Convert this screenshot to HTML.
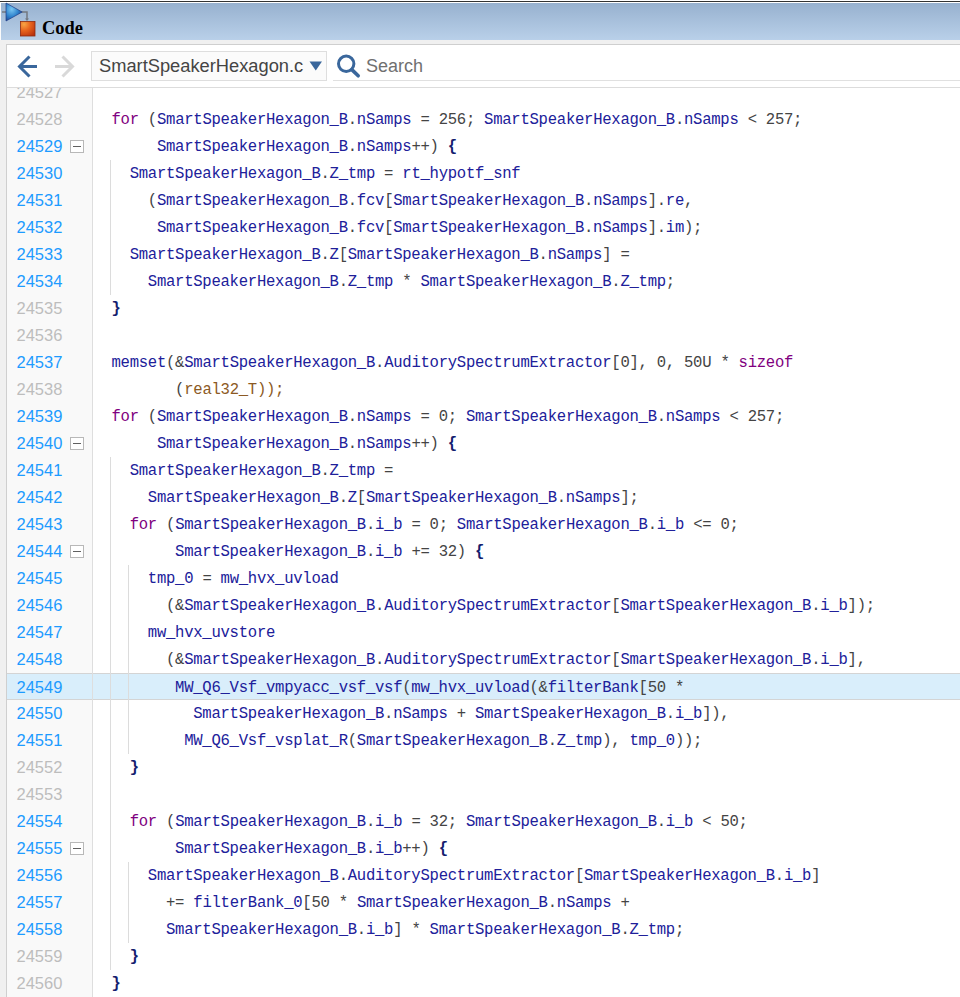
<!DOCTYPE html>
<html><head><meta charset="utf-8">
<style>
html,body{margin:0;padding:0;}
body{width:960px;height:997px;overflow:hidden;background:#f0f0f0;position:relative;font-family:"Liberation Sans",sans-serif;}
#topline{position:absolute;left:0;top:0;width:960px;height:3px;background:#fff;}
#lstrip{position:absolute;left:0;top:0;width:1px;height:40px;background:#fbfbfb;}
#topline i{position:absolute;left:0;top:1px;width:960px;height:1px;background:#333;}
#hdr{position:absolute;left:1px;top:3px;width:959px;height:37px;background:linear-gradient(#97b1cf,#b9d0e9);}
#hdr svg{position:absolute;left:-1px;top:-3px;}
#hdr .t{position:absolute;left:40.5px;top:14.5px;font-family:"Liberation Serif",serif;font-weight:bold;font-size:19px;color:#000;line-height:20px;transform:scaleX(0.97);transform-origin:0 0;}
#panel{position:absolute;left:6px;top:44px;width:960px;height:960px;border:1px solid #cfcfcf;background:#fff;}
#tb{position:absolute;left:7px;top:45px;width:953px;height:42px;background:#fff;}
#sep{position:absolute;left:7px;top:87px;width:953px;height:1px;background:#dcdcdc;}
#dd{position:absolute;left:91px;top:51px;width:234px;height:28px;border:1px solid #dedede;background:#fbfbfb;}
#dd .t{position:absolute;left:7px;top:3.5px;font-size:18.3px;line-height:20px;color:#444;white-space:nowrap;}
#search{position:absolute;left:366px;top:55.5px;font-size:18px;line-height:20px;color:#707070;}
#sline{position:absolute;left:333px;top:80px;width:627px;height:1px;background:#e0e0e0;}
#code{position:absolute;left:7px;top:88px;width:953px;height:909px;overflow:hidden;background:#fff;}
#gut{position:absolute;left:0;top:0;width:85px;height:909px;background:#f9f9f9;}
#gutb{position:absolute;left:85px;top:0;width:1px;height:909px;background:#dedede;}
.ln{position:absolute;left:0;width:953px;height:27px;}
.ln .n{position:absolute;left:9.5px;top:0;font-size:16.5px;line-height:27px;color:#bdbdbd;}
.ln .n.b{color:#1d9bff;}
.ln .c{position:absolute;left:104.5px;top:1px;font-family:"Liberation Mono",monospace;font-size:15.6px;letter-spacing:-0.2715px;line-height:27px;white-space:pre;color:#20209a;}
.fold{position:absolute;left:63px;top:7px;width:12px;height:11px;border:1px solid #b8b8b8;background:#fff;}
.fold i{position:absolute;left:2px;top:5px;width:8px;height:1px;background:#606060;}
.g{position:absolute;width:1px;background:#dcdcdc;}
.hl{background:#d9eefb;border-top:1px solid #d4d4d4;border-bottom:1px solid #d4d4d4;box-sizing:border-box;}
.k{color:#800080;}
.o{color:#444;}
.ty{color:#8c5a24;}
.br{color:#14206e;font-weight:bold;}
</style></head><body>
<div id="lstrip"></div><div id="topline"><i></i></div>
<div id="hdr">
<svg width="40" height="40" viewBox="0 0 40 40">
<defs>
<radialGradient id="tri" cx="0.35" cy="0.35" r="0.75"><stop offset="0" stop-color="#79c6f2"/><stop offset="0.55" stop-color="#2e82cc"/><stop offset="1" stop-color="#1b3f8e"/></radialGradient>
<radialGradient id="sq" cx="0.25" cy="0.2" r="0.95"><stop offset="0" stop-color="#f7a545"/><stop offset="0.45" stop-color="#e8651f"/><stop offset="1" stop-color="#b93310"/></radialGradient>
</defs>
<path d="M2 12H6.5M21.5 12H27V19" stroke="#737880" stroke-width="1.5" fill="none"/>
<path d="M25 18.5L27 21L29 18.5Z" fill="#737880"/>
<path d="M6 3L22.2 12L6 21Z" fill="url(#tri)" stroke="#1f3d86" stroke-width="0.7" stroke-linejoin="round"/>
<rect x="20.4" y="21.4" width="14.6" height="14.6" fill="url(#sq)" stroke="#8c2c12" stroke-width="0.8"/>
</svg>
<div class="t">Code</div>
</div>
<div id="panel"></div>
<div id="tb">
<svg style="position:absolute;left:0;top:0" width="80" height="42" viewBox="0 0 80 42">
<path d="M22.5 11.5L12.5 21.5L22.5 31.5M12.5 21.5H30" stroke="#3a679c" stroke-width="3" fill="none"/>
<path d="M55.5 11.5L65.5 21.5L55.5 31.5M48 21.5H65.5" stroke="#d9d9d9" stroke-width="3" fill="none"/>
</svg>
</div>
<div id="dd"><div class="t">SmartSpeakerHexagon.c</div>
<svg style="position:absolute;left:217px;top:9px" width="14" height="10" viewBox="0 0 14 10"><path d="M0.5 0.5H13L6.75 9.5Z" fill="#3a679c"/></svg>
</div>
<svg style="position:absolute;left:335px;top:54px" width="26" height="26" viewBox="0 0 26 26">
<circle cx="11.2" cy="9.8" r="7.7" stroke="#3a679c" stroke-width="3" fill="none"/>
<path d="M16.8 15.6L23.2 21.8" stroke="#3a679c" stroke-width="3.6" stroke-linecap="round"/>
</svg>
<div id="search">Search</div>
<div id="sline"></div>
<div id="sep"></div>
<div id="code">
<div id="gut"></div>
<div class="ln" style="top:-9px"><span class="n">24527</span><span class="c"></span></div>
<div class="ln" style="top:18px"><span class="n">24528</span><span class="c"><span class="k">for</span> <span class="o">(</span>SmartSpeakerHexagon_B<span class="o">.</span>nSamps <span class="o">=</span> <span class="o">256;</span> SmartSpeakerHexagon_B<span class="o">.</span>nSamps <span class="o">&lt;</span> <span class="o">257;</span></span></div>
<div class="ln" style="top:45px"><span class="n b">24529</span><span class="fold"><i></i></span><span class="c">     SmartSpeakerHexagon_B<span class="o">.</span>nSamps<span class="o">++)</span> <span class="br">{</span></span></div>
<div class="ln" style="top:72px"><span class="n b">24530</span><span class="c">  SmartSpeakerHexagon_B<span class="o">.</span>Z_tmp <span class="o">=</span> rt_hypotf_snf</span></div>
<div class="ln" style="top:99px"><span class="n b">24531</span><span class="c">    <span class="o">(</span>SmartSpeakerHexagon_B<span class="o">.</span>fcv<span class="o">[</span>SmartSpeakerHexagon_B<span class="o">.</span>nSamps<span class="o">].</span>re<span class="o">,</span></span></div>
<div class="ln" style="top:126px"><span class="n b">24532</span><span class="c">     SmartSpeakerHexagon_B<span class="o">.</span>fcv<span class="o">[</span>SmartSpeakerHexagon_B<span class="o">.</span>nSamps<span class="o">].</span>im<span class="o">);</span></span></div>
<div class="ln" style="top:153px"><span class="n b">24533</span><span class="c">  SmartSpeakerHexagon_B<span class="o">.</span>Z<span class="o">[</span>SmartSpeakerHexagon_B<span class="o">.</span>nSamps<span class="o">]</span> <span class="o">=</span></span></div>
<div class="ln" style="top:180px"><span class="n b">24534</span><span class="c">    SmartSpeakerHexagon_B<span class="o">.</span>Z_tmp <span class="o">*</span> SmartSpeakerHexagon_B<span class="o">.</span>Z_tmp<span class="o">;</span></span></div>
<div class="ln" style="top:207px"><span class="n">24535</span><span class="c"><span class="br">}</span></span></div>
<div class="ln" style="top:234px"><span class="n">24536</span><span class="c"></span></div>
<div class="ln" style="top:261px"><span class="n b">24537</span><span class="c">memset<span class="o">(&amp;</span>SmartSpeakerHexagon_B<span class="o">.</span>AuditorySpectrumExtractor<span class="o">[0],</span> <span class="o">0,</span> <span class="o">50U</span> <span class="o">*</span> <span class="k">sizeof</span></span></div>
<div class="ln" style="top:288px"><span class="n">24538</span><span class="c">       <span class="o">(</span><span class="ty">real32_T));</span></span></div>
<div class="ln" style="top:315px"><span class="n b">24539</span><span class="c"><span class="k">for</span> <span class="o">(</span>SmartSpeakerHexagon_B<span class="o">.</span>nSamps <span class="o">=</span> <span class="o">0;</span> SmartSpeakerHexagon_B<span class="o">.</span>nSamps <span class="o">&lt;</span> <span class="o">257;</span></span></div>
<div class="ln" style="top:342px"><span class="n b">24540</span><span class="fold"><i></i></span><span class="c">     SmartSpeakerHexagon_B<span class="o">.</span>nSamps<span class="o">++)</span> <span class="br">{</span></span></div>
<div class="ln" style="top:369px"><span class="n b">24541</span><span class="c">  SmartSpeakerHexagon_B<span class="o">.</span>Z_tmp <span class="o">=</span></span></div>
<div class="ln" style="top:396px"><span class="n b">24542</span><span class="c">    SmartSpeakerHexagon_B<span class="o">.</span>Z<span class="o">[</span>SmartSpeakerHexagon_B<span class="o">.</span>nSamps<span class="o">];</span></span></div>
<div class="ln" style="top:423px"><span class="n b">24543</span><span class="c">  <span class="k">for</span> <span class="o">(</span>SmartSpeakerHexagon_B<span class="o">.</span>i_b <span class="o">=</span> <span class="o">0;</span> SmartSpeakerHexagon_B<span class="o">.</span>i_b <span class="o">&lt;=</span> <span class="o">0;</span></span></div>
<div class="ln" style="top:450px"><span class="n b">24544</span><span class="fold"><i></i></span><span class="c">       SmartSpeakerHexagon_B<span class="o">.</span>i_b <span class="o">+=</span> <span class="o">32)</span> <span class="br">{</span></span></div>
<div class="ln" style="top:477px"><span class="n b">24545</span><span class="c">    tmp_0 <span class="o">=</span> mw_hvx_uvload</span></div>
<div class="ln" style="top:504px"><span class="n b">24546</span><span class="c">      <span class="o">(&amp;</span>SmartSpeakerHexagon_B<span class="o">.</span>AuditorySpectrumExtractor<span class="o">[</span>SmartSpeakerHexagon_B<span class="o">.</span>i_b<span class="o">]);</span></span></div>
<div class="ln" style="top:531px"><span class="n b">24547</span><span class="c">    mw_hvx_uvstore</span></div>
<div class="ln" style="top:558px"><span class="n b">24548</span><span class="c">      <span class="o">(&amp;</span>SmartSpeakerHexagon_B<span class="o">.</span>AuditorySpectrumExtractor<span class="o">[</span>SmartSpeakerHexagon_B<span class="o">.</span>i_b<span class="o">],</span></span></div>
<div class="ln hl" style="top:585px"><span class="n b">24549</span><span class="c">       MW_Q6_Vsf_vmpyacc_vsf_vsf<span class="o">(</span>mw_hvx_uvload<span class="o">(&amp;</span>filterBank<span class="o">[50</span> <span class="o">*</span></span></div>
<div class="ln" style="top:612px"><span class="n b">24550</span><span class="c">         SmartSpeakerHexagon_B<span class="o">.</span>nSamps <span class="o">+</span> SmartSpeakerHexagon_B<span class="o">.</span>i_b<span class="o">]),</span></span></div>
<div class="ln" style="top:639px"><span class="n b">24551</span><span class="c">        MW_Q6_Vsf_vsplat_R<span class="o">(</span>SmartSpeakerHexagon_B<span class="o">.</span>Z_tmp<span class="o">),</span> tmp_0<span class="o">));</span></span></div>
<div class="ln" style="top:666px"><span class="n">24552</span><span class="c">  <span class="br">}</span></span></div>
<div class="ln" style="top:693px"><span class="n">24553</span><span class="c"></span></div>
<div class="ln" style="top:720px"><span class="n b">24554</span><span class="c">  <span class="k">for</span> <span class="o">(</span>SmartSpeakerHexagon_B<span class="o">.</span>i_b <span class="o">=</span> <span class="o">32;</span> SmartSpeakerHexagon_B<span class="o">.</span>i_b <span class="o">&lt;</span> <span class="o">50;</span></span></div>
<div class="ln" style="top:747px"><span class="n b">24555</span><span class="fold"><i></i></span><span class="c">       SmartSpeakerHexagon_B<span class="o">.</span>i_b<span class="o">++)</span> <span class="br">{</span></span></div>
<div class="ln" style="top:774px"><span class="n b">24556</span><span class="c">    SmartSpeakerHexagon_B<span class="o">.</span>AuditorySpectrumExtractor<span class="o">[</span>SmartSpeakerHexagon_B<span class="o">.</span>i_b<span class="o">]</span></span></div>
<div class="ln" style="top:801px"><span class="n b">24557</span><span class="c">      <span class="o">+=</span> filterBank_0<span class="o">[50</span> <span class="o">*</span> SmartSpeakerHexagon_B<span class="o">.</span>nSamps <span class="o">+</span></span></div>
<div class="ln" style="top:828px"><span class="n b">24558</span><span class="c">      SmartSpeakerHexagon_B<span class="o">.</span>i_b<span class="o">]</span> <span class="o">*</span> SmartSpeakerHexagon_B<span class="o">.</span>Z_tmp<span class="o">;</span></span></div>
<div class="ln" style="top:855px"><span class="n">24559</span><span class="c">  <span class="br">}</span></span></div>
<div class="ln" style="top:882px"><span class="n">24560</span><span class="c"><span class="br">}</span></span></div>
<i class="g" style="left:103px;top:72px;height:135px"></i>
<i class="g" style="left:103px;top:369px;height:513px"></i>
<i class="g" style="left:121px;top:477px;height:189px"></i>
<i class="g" style="left:121px;top:774px;height:81px"></i>
<i id="gutb"></i>
</div>
</body></html>
